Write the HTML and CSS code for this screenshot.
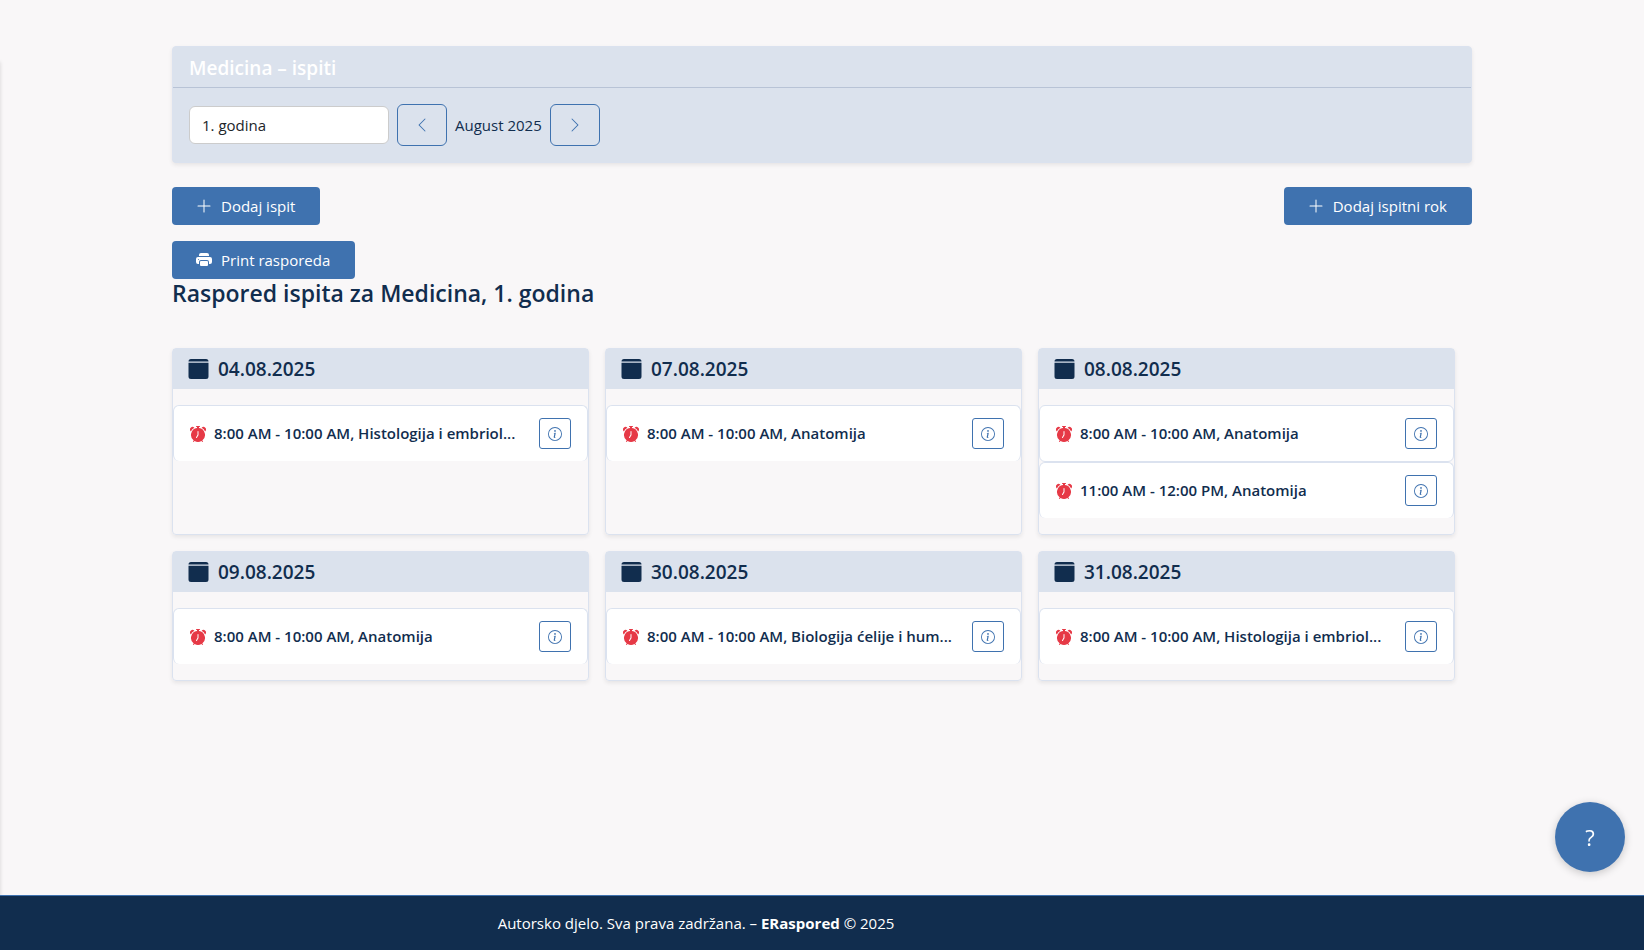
FILE: index.html
```
<!DOCTYPE html>
<html lang="bs">
<head>
<meta charset="utf-8">
<title>ERaspored – Medicina ispiti</title>
<link rel="stylesheet" href="styles.css">
</head>
<body>
<svg class="sprite" aria-hidden="true">
  <symbol id="left" viewBox="0 0 16 16"><path fill-rule="evenodd" d="M11.354 1.646a.5.5 0 0 1 0 .708L5.707 8l5.647 5.646a.5.5 0 0 1-.708.708l-6-6a.5.5 0 0 1 0-.708l6-6a.5.5 0 0 1 .708 0"/></symbol>
  <symbol id="right" viewBox="0 0 16 16"><path fill-rule="evenodd" d="M4.646 1.646a.5.5 0 0 1 .708 0l6 6a.5.5 0 0 1 0 .708l-6 6a.5.5 0 0 1-.708-.708L10.293 8 4.646 2.354a.5.5 0 0 1 0-.708"/></symbol>
  <symbol id="plus" viewBox="0 0 16 16"><path fill-rule="evenodd" d="M8 1.500a.5.5 0 0 1 .5.5v5.500H14a.5.5 0 0 1 0 1H8.500V14a.5.5 0 0 1-1 0V8.500H2a.5.5 0 0 1 0-1h5.500V2a.5.5 0 0 1 .5-.5"/></symbol>
  <symbol id="printer" viewBox="0 0 16 16"><path d="M5 1a2 2 0 0 0-2 2v1h10V3a2 2 0 0 0-2-2zm6 8H5a1 1 0 0 0-1 1v3a1 1 0 0 0 1 1h6a1 1 0 0 0 1-1v-3a1 1 0 0 0-1-1"/><path d="M0 7a2 2 0 0 1 2-2h12a2 2 0 0 1 2 2v3a2 2 0 0 1-2 2h-1v-2a2 2 0 0 0-2-2H5a2 2 0 0 0-2 2v2H2a2 2 0 0 1-2-2zm2.500 1a.5.5 0 1 0 0-1 .5.5 0 0 0 0 1"/></symbol>
  <symbol id="calendar" viewBox="0 0 16 16"><path d="M0 2a2 2 0 0 1 2-2h12a2 2 0 0 1 2 2H0m0 1h16v11a2 2 0 0 1-2 2H2a2 2 0 0 1-2-2z"/></symbol>
  <symbol id="alarm" viewBox="0 0 16 16"><path d="M6 .5a.5.5 0 0 1 .5-.5h3a.5.5 0 0 1 0 1H9v1.070a7.001 7.001 0 0 1 3.274 12.474l.601.602a.5.5 0 0 1-.707.708l-.746-.746A6.970 6.970 0 0 1 8 16a6.970 6.970 0 0 1-3.422-.892l-.746.746a.5.5 0 0 1-.707-.708l.602-.602A7.001 7.001 0 0 1 7 2.070V1h-.5A.5.5 0 0 1 6 .5m2.500 5a.5.5 0 0 0-1 0v3.362l-1.429 2.380a.5.5 0 1 0 .858.515l1.500-2.500A.5.5 0 0 0 8.500 9zM.860 5.387A2.500 2.500 0 1 1 4.387 1.860 8.040 8.040 0 0 0 .860 5.387M11.613 1.860a2.500 2.500 0 1 1 3.527 3.527 8.040 8.040 0 0 0-3.527-3.527"/></symbol>
  <symbol id="info" viewBox="0 0 16 16"><path d="M8 15A7 7 0 1 1 8 1a7 7 0 0 1 0 14m0 1A8 8 0 1 0 8 0a8 8 0 0 0 0 16"/><path d="m8.930 6.588-2.290.287-.082.380.450.083c.294.070.352.176.288.469l-.738 3.468c-.194.897.105 1.319.808 1.319.545 0 1.178-.252 1.465-.598l.088-.416c-.200.176-.492.246-.686.246-.275 0-.375-.193-.304-.533zM9 4.500a1 1 0 1 1-2 0 1 1 0 0 1 2 0"/></symbol>
</svg>
<div class="sidebar"></div>
<main class="container">
  <section class="filter">
    <h1 class="filter-title">Medicina – ispiti</h1>
    <div class="filter-body">
      <select class="year" aria-label="Godina"><option>1. godina</option></select>
      <button class="nav" type="button" aria-label="Prethodni mjesec"><svg class="icon"><use href="#left"/></svg></button>
      <span>August 2025</span>
      <button class="nav" type="button" aria-label="Sljedeći mjesec"><svg class="icon"><use href="#right"/></svg></button>
    </div>
  </section>
  <div class="actions">
    <button class="btn" type="button"><svg class="icon"><use href="#plus"/></svg>Dodaj ispit</button>
    <button class="btn" type="button"><svg class="icon"><use href="#plus"/></svg>Dodaj ispitni rok</button>
  </div>
  <button class="btn" type="button"><svg class="icon"><use href="#printer"/></svg>Print rasporeda</button>
  <h2 class="heading">Raspored ispita za Medicina, 1. godina</h2>
  <div class="days">
    <section class="day">
      <h3 class="day-title"><svg class="cal"><use href="#calendar"/></svg>04.08.2025</h3>
      <ul class="exams">
        <li class="exam"><svg class="icon alarm"><use href="#alarm"/></svg><span class="exam-name">8:00 AM - 10:00 AM, Histologija i embriol...</span><button class="info" type="button" aria-label="Detalji"><svg class="icon-sm"><use href="#info"/></svg></button></li>
      </ul>
    </section>
    <section class="day">
      <h3 class="day-title"><svg class="cal"><use href="#calendar"/></svg>07.08.2025</h3>
      <ul class="exams">
        <li class="exam"><svg class="icon alarm"><use href="#alarm"/></svg><span class="exam-name">8:00 AM - 10:00 AM, Anatomija</span><button class="info" type="button" aria-label="Detalji"><svg class="icon-sm"><use href="#info"/></svg></button></li>
      </ul>
    </section>
    <section class="day">
      <h3 class="day-title"><svg class="cal"><use href="#calendar"/></svg>08.08.2025</h3>
      <ul class="exams">
        <li class="exam"><svg class="icon alarm"><use href="#alarm"/></svg><span class="exam-name">8:00 AM - 10:00 AM, Anatomija</span><button class="info" type="button" aria-label="Detalji"><svg class="icon-sm"><use href="#info"/></svg></button></li>
        <li class="exam"><svg class="icon alarm"><use href="#alarm"/></svg><span class="exam-name">11:00 AM - 12:00 PM, Anatomija</span><button class="info" type="button" aria-label="Detalji"><svg class="icon-sm"><use href="#info"/></svg></button></li>
      </ul>
    </section>
    <section class="day">
      <h3 class="day-title"><svg class="cal"><use href="#calendar"/></svg>09.08.2025</h3>
      <ul class="exams">
        <li class="exam"><svg class="icon alarm"><use href="#alarm"/></svg><span class="exam-name">8:00 AM - 10:00 AM, Anatomija</span><button class="info" type="button" aria-label="Detalji"><svg class="icon-sm"><use href="#info"/></svg></button></li>
      </ul>
    </section>
    <section class="day">
      <h3 class="day-title"><svg class="cal"><use href="#calendar"/></svg>30.08.2025</h3>
      <ul class="exams">
        <li class="exam"><svg class="icon alarm"><use href="#alarm"/></svg><span class="exam-name">8:00 AM - 10:00 AM, Biologija ćelije i hum...</span><button class="info" type="button" aria-label="Detalji"><svg class="icon-sm"><use href="#info"/></svg></button></li>
      </ul>
    </section>
    <section class="day">
      <h3 class="day-title"><svg class="cal"><use href="#calendar"/></svg>31.08.2025</h3>
      <ul class="exams">
        <li class="exam"><svg class="icon alarm"><use href="#alarm"/></svg><span class="exam-name">8:00 AM - 10:00 AM, Histologija i embriol...</span><button class="info" type="button" aria-label="Detalji"><svg class="icon-sm"><use href="#info"/></svg></button></li>
      </ul>
    </section>
  </div>
</main>
<footer class="footer">Autorsko djelo. Sva prava zadržana. – <strong>ERaspored</strong> © 2025</footer>
<button class="help" type="button">?</button>
</body>
</html>
```

FILE: styles.css
```
* { box-sizing: border-box; }
body {
  margin: 0;
  min-height: 100vh;
  display: flex;
  flex-direction: column;
  background: #f9f7f8;
  color: #112d4e;
  font: 15px/24px "Open Sans", "Noto Sans", sans-serif;
}
button, select { font: inherit; color: inherit; }
button { cursor: pointer; }
.sprite { display: none; }
.icon { width: 16px; height: 16px; flex: none; fill: currentColor; }
.icon-sm { width: 14px; height: 14px; fill: currentColor; }
.sidebar {
  position: fixed;
  top: 60px;
  bottom: 0;
  left: -250px;
  width: 250px;
  box-shadow: 0 2px 4px rgba(0, 0, 0, .15);
}
.container {
  flex: 1;
  width: 100%;
  max-width: 1300px;
  margin: 0 auto;
  padding: 46px 0 16px;
}
.filter {
  border: 1px solid #dbe2ef;
  border-radius: 4px;
  background: #dbe2ed;
  box-shadow: 0 2px 4px rgba(0, 0, 0, .08);
}
.filter-title {
  margin: 0;
  padding: 9px 16px 7px;
  border-bottom: 1px solid #b8c3d6;
  color: #fff;
  font-size: 19px;
  font-weight: 600;
  line-height: 24px;
}
.filter-body { display: flex; align-items: center; gap: 8px; padding: 16px; }
.year {
  appearance: none;
  width: 200px;
  height: 38px;
  padding: 0 12px;
  border: 1px solid #ccc;
  border-radius: 6px;
  background: #fff;
  color: #212529;
}
.nav {
  display: grid;
  place-items: center;
  width: 50px;
  height: 42px;
  padding: 0;
  border: 1px solid #3f72af;
  border-radius: 6px;
  background: none;
  color: #3f72af;
}
.actions { display: flex; justify-content: space-between; margin: 24px 0 16px; }
.btn {
  display: flex;
  align-items: center;
  gap: 9px;
  height: 38px;
  padding: 0 25px 0 24px;
  border: 0;
  border-radius: 4px;
  background: #3f72af;
  color: #fff;
}
.heading { margin: 0 0 40px; font-size: 23px; font-weight: 600; line-height: 29px; }
.days {
  display: grid;
  grid-template-columns: repeat(3, 1fr);
  gap: 16px;
  padding-right: 17px;
}
.day {
  min-width: 0;
  border: 1px solid #dbe2ef;
  border-radius: 4px;
  box-shadow: 0 2px 4px rgba(0, 0, 0, .08);
}
.day-title {
  display: flex;
  align-items: center;
  gap: 9px;
  margin: 0;
  padding: 8px 15px;
  background: #dbe2ed;
  font-size: 19px;
  font-weight: 600;
  line-height: 24px;
}
.cal { width: 21px; height: 20px; fill: currentColor; }
.exams { margin: 0; padding: 16px 0; list-style: none; }
.exam {
  display: flex;
  align-items: center;
  gap: 8px;
  padding: 12px 16px;
  border: 1px solid #dbe2ef;
  border-radius: 6px;
  background: #fff;
  font-weight: 600;
}
.exam:last-child { border-bottom: 0; }
.alarm { color: #e63946; }
.exam-name { flex: 1; overflow: hidden; text-overflow: ellipsis; white-space: nowrap; line-height: 23px; }
.info {
  display: grid;
  place-items: center;
  width: 32px;
  height: 31px;
  padding: 0;
  border: 1px solid #3f72af;
  border-radius: 3px;
  background: none;
  color: #3f72af;
}
.footer {
  position: relative;
  padding: 15px 252px 15px 0;
  border-top: 1px solid #3f72af;
  background: #112d4e;
  color: #fff;
  text-align: center;
}
.help {
  position: fixed;
  right: 19px;
  bottom: 78px;
  width: 70px;
  height: 70px;
  border: 0;
  border-radius: 50%;
  background: #3f72af;
  box-shadow: 0 2px 8px rgba(0, 0, 0, .2);
  color: #fff;
  font-size: 22px;
}
```
